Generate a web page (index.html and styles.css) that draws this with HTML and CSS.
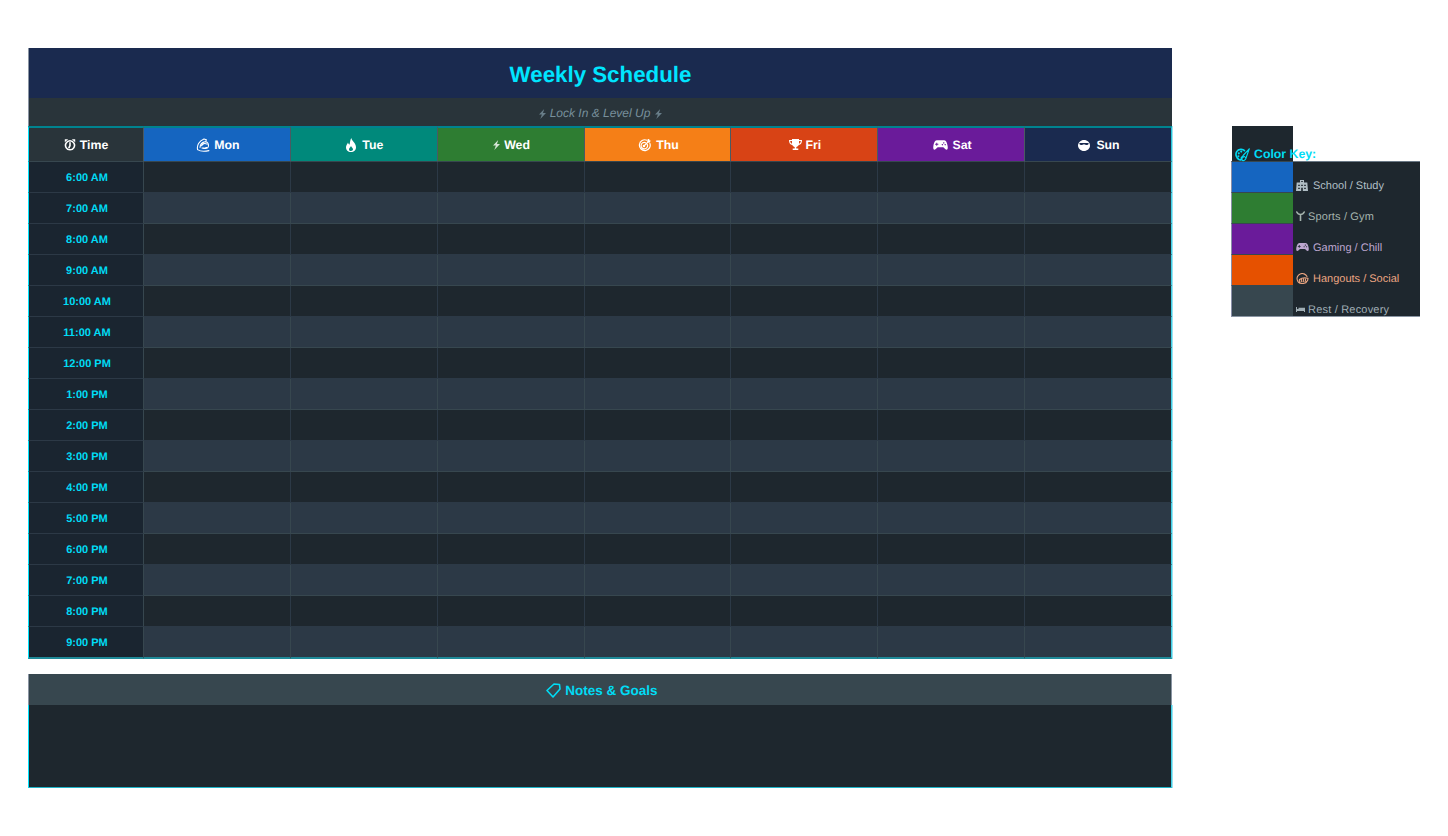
FILE: index.html
```html
<!DOCTYPE html>
<html lang="en">
<head>
<meta charset="utf-8">
<title>Weekly Schedule</title>
<link rel="stylesheet" href="styles.css">
</head>
<body>
<div class="page">
  <main class="main">
    <table class="schedule">
      <colgroup><col class="col-time"><col span="7"></colgroup>
      <thead>
        <tr class="title-row"><th colspan="8">Weekly Schedule</th></tr>
        <tr class="sub-row"><th colspan="8"><svg class="ico i-bolt" viewBox="0 0 7 10"><path d="M5.200 0 0 5.600h2.900L1.300 10 7 3.900H4z"/></svg>Lock In &amp; Level Up<svg class="ico i-bolt i-after" viewBox="0 0 7 10"><path d="M5.200 0 0 5.600h2.900L1.300 10 7 3.900H4z"/></svg></th></tr>
        <tr class="head-row">
          <th class="h-time"><svg class="ico i-clock" viewBox="0 0 12 12"><path class="ln ln-heavy" d="M6 1.800a4.500 4.500 0 1 0 .01 0zM6 3.800V6.600L5 8.600"/><path d="M.8.300h3.400L.8 3.200zM11.200.300H7.800l3.400 2.900z"/></svg>Time</th>
          <th class="h-mon"><svg class="ico i-arm" viewBox="0 0 14 14"><path class="ln" d="M1.600 11.600C.6 7.600 3 2.800 8 .9l2.400.8-.9 2.200c2-.5 3.600 2.600 2.700 5-1 2-3.600 2-5 1M1.600 11.600c3 2 7.500 1.800 11.300 1M5.600 7.800c1-2.200 3.200-3 5.400-1.700M4 9.500c.3-3 2-5 4.500-5.600M6 10c1.500.6 3 .4 4.400-.5"/></svg>Mon</th>
          <th class="h-tue"><svg class="ico i-flame" viewBox="0 0 10 14"><path fill-rule="evenodd" d="M5.300 0C6 3.200 10 5 10 9.200 10 12 8 14 5 14S0 12 0 9.200C0 7.200 1.300 6 2 4.400 2.400 5.800 3 6.500 3.600 6.500 4 4.500 4.200 2 5.300 0zM5 8C4.300 9.500 3 10 3 11.500 3 12.800 4 13 5 13s2-.5 2-1.700C7 10 5.700 9.500 5 8z"/></svg>Tue</th>
          <th class="h-wed"><svg class="ico i-bolt" viewBox="0 0 7 10"><path d="M5.200 0 0 5.600h2.900L1.300 10 7 3.900H4z"/></svg>Wed</th>
          <th class="h-thu"><svg class="ico i-target" viewBox="0 0 12 12"><path class="ln" d="M8.200 1.100A5 5 0 1 0 10.900 3.800M7 3.400A3 3 0 1 0 8.600 5M5.500 6.500 10 2"/><circle cx="5.500" cy="6.500" r="1.200"/><path d="M9 0h1.300l.4 1.300L12 1.700 10.200 3.500 8.500 3z"/></svg>Thu</th>
          <th class="h-fri"><svg class="ico i-trophy" viewBox="0 0 13 12"><path fill-rule="evenodd" d="M3 0h7v1h3c0 3-1 4.600-3.300 5-.5 1-1.400 1.700-2.400 2v1.600h2V11H3.700V9.600h2V8c-1-.3-1.900-1-2.400-2C1 5.600 0 4 0 1h3zM1.200 2c.1 1.300.7 2.400 1.800 2.800V2zM10 2v2.800c1.100-.4 1.700-1.500 1.800-2.800z"/></svg>Fri</th>
          <th class="h-sat"><svg class="ico i-pad" viewBox="0 0 16 12"><path fill-rule="evenodd" d="M4 1h8c2 0 3 3 3.600 6 .4 2.500 0 4-1.200 4-1.500 0-2.500-2.500-3.900-2.500h-5C4.100 8.500 3.100 11 1.600 11 .4 11 0 9.500.4 7 1 4 2 1 4 1zM3.500 3.500v1.200H2.300v1h1.200v1.200h1V5.700h1.200v-1H4.500V3.500zM11.500 3a.7.7 0 1 0 .01 0zM10 5a.7.7 0 1 0 .01 0zM13 5a.7.7 0 1 0 .01 0z"/></svg>Sat</th>
          <th class="h-sun"><svg class="ico i-face" viewBox="0 0 12 11"><path fill-rule="evenodd" d="M6 0c3.300 0 6 2.400 6 5.500S9.300 11 6 11 0 8.400 0 5.500 2.700 0 6 0zM2.200 3C1.500 3 1.200 3.500 1.400 4c.4 1 1.500 1.300 2.500.9L6 4.200l2.100.7c1 .4 2.100.1 2.500-.9.200-.5-.1-1-.8-1z"/></svg>Sun</th>
        </tr>
      </thead>
      <tbody>
        <tr><th>6:00 AM</th><td></td><td></td><td></td><td></td><td></td><td></td><td></td></tr>
        <tr><th>7:00 AM</th><td></td><td></td><td></td><td></td><td></td><td></td><td></td></tr>
        <tr><th>8:00 AM</th><td></td><td></td><td></td><td></td><td></td><td></td><td></td></tr>
        <tr><th>9:00 AM</th><td></td><td></td><td></td><td></td><td></td><td></td><td></td></tr>
        <tr><th>10:00 AM</th><td></td><td></td><td></td><td></td><td></td><td></td><td></td></tr>
        <tr><th>11:00 AM</th><td></td><td></td><td></td><td></td><td></td><td></td><td></td></tr>
        <tr><th>12:00 PM</th><td></td><td></td><td></td><td></td><td></td><td></td><td></td></tr>
        <tr><th>1:00 PM</th><td></td><td></td><td></td><td></td><td></td><td></td><td></td></tr>
        <tr><th>2:00 PM</th><td></td><td></td><td></td><td></td><td></td><td></td><td></td></tr>
        <tr><th>3:00 PM</th><td></td><td></td><td></td><td></td><td></td><td></td><td></td></tr>
        <tr><th>4:00 PM</th><td></td><td></td><td></td><td></td><td></td><td></td><td></td></tr>
        <tr><th>5:00 PM</th><td></td><td></td><td></td><td></td><td></td><td></td><td></td></tr>
        <tr><th>6:00 PM</th><td></td><td></td><td></td><td></td><td></td><td></td><td></td></tr>
        <tr><th>7:00 PM</th><td></td><td></td><td></td><td></td><td></td><td></td><td></td></tr>
        <tr><th>8:00 PM</th><td></td><td></td><td></td><td></td><td></td><td></td><td></td></tr>
        <tr><th>9:00 PM</th><td></td><td></td><td></td><td></td><td></td><td></td><td></td></tr>
      </tbody>
    </table>
    <section class="notes">
      <h2 class="notes-head"><svg class="ico i-tag" viewBox="0 0 15 15"><path class="ln ln-heavy" d="M1 7.500 8 1l5.500.5.500 4.500-7 8z"/></svg>Notes &amp; Goals</h2>
      <div class="notes-body"></div>
    </section>
  </main>
  <aside class="legend">
    <table class="key">
      <colgroup><col class="key-col"><col></colgroup>
      <tr class="key-title"><th><svg class="ico i-palette" viewBox="0 0 15 14"><path class="ln ln-heavy" d="M9.500 2.600C7.800.8 3.500.8 1.700 3.600.1 6.400 1.300 10 4 11.500c1.600.8 2.700 0 2.400-1-.3-1.300.9-1.900 2-1.600"/><path d="M3.800 4.200a1 1 0 1 0 .01 0zM6.200 2.500a1 1 0 1 0 .01 0zM3.400 7.200a1 1 0 1 0 .01 0z"/><path class="ln" d="M14.300.8 8.500 7c-1.100 1.200-1.900 3.500-1.300 5.500 2.300.6 3.600-1.300 4-3zM9.200 8.400l1.700 1.400"/></svg>Color Key:</th><td></td></tr>
      <tr class="key-first"><td class="sw sw-blue"></td><td class="lab"><svg class="ico i-school" viewBox="0 0 12 11"><path fill-rule="evenodd" d="M4 0h4v2.500h3.300L12 11H0l.7-8.500H4zM5.200 1v1h1.600V1zM2.200 4.700V6h1.600V4.700zM5.200 4.700V6h1.600V4.700zM8.200 4.700V6h1.600V4.700zM2.200 7.700V9h1.600V7.700zM5.200 7.700V11h1.600V7.700zM8.200 7.700V9h1.600V7.700z"/></svg>School / Study</td></tr>
      <tr><td class="sw sw-green"></td><td class="lab lab-sports"><svg class="ico i-lift" viewBox="0 0 9 10"><path class="ln ln-heavy" d="M.8 1c.8 1.800 2.200 2.500 3.700 2.500S7.400 2.800 8.200 1M4.500 3.500V10"/></svg>Sports / Gym</td></tr>
      <tr><td class="sw sw-purple"></td><td class="lab lab-gaming"><svg class="ico i-pad2" viewBox="0 0 16 12"><path fill-rule="evenodd" d="M4 1h8c2 0 3 3 3.600 6 .4 2.500 0 4-1.200 4-1.500 0-2.500-2.500-3.900-2.500h-5C4.100 8.500 3.100 11 1.600 11 .4 11 0 9.500.4 7 1 4 2 1 4 1zM3.500 3.500v1.200H2.300v1h1.200v1.200h1V5.700h1.200v-1H4.500V3.500zM11.500 3a.7.7 0 1 0 .01 0zM10 5a.7.7 0 1 0 .01 0zM13 5a.7.7 0 1 0 .01 0z"/></svg>Gaming / Chill</td></tr>
      <tr><td class="sw sw-orange"></td><td class="lab lab-social"><svg class="ico i-hands" viewBox="0 0 13 11"><path class="ln" d="M1.500 7.500A5 4.800 0 0 1 11 3.500M1.500 7.500c.5 2 2.500 3 5 3 2 0 4-.6 4.500-2.500M3.500 6.500c-.3 1.200-.2 2 .5 2.400M5.500 6c-.3 1.200-.2 2.300.5 2.700M7.500 6c-.3 1.200-.2 2.300.5 2.700M9.500 6.200c-.3 1-.2 1.800.5 2.200M3.500 6.500c2-1.500 5-2 8.500-1.200l-.5 2.500"/></svg>Hangouts / Social</td></tr>
      <tr class="key-last"><td class="sw sw-grey"></td><td class="lab lab-rest"><svg class="ico i-bed" viewBox="0 0 9 5"><path d="M0 0h1v2h1.500V.8H9V5H8V4H1v1H0z"/></svg>Rest / Recovery</td></tr>
    </table>
  </aside>
</div>
</body>
</html>
```
FILE: styles.css
```css
* { box-sizing: border-box; }
html, body { margin: 0; background: #fff; }
body { font-family: "Liberation Sans", Arial, sans-serif; text-rendering: geometricPrecision; }
.page { display: flex; align-items: flex-start; padding: 48px 0 0 28px; }
.main { width: 1144px; flex: none; display: flex; flex-direction: column; gap: 15px; }

.ico { display: inline-block; fill: currentColor; vertical-align: middle; margin-top: -4px; margin-bottom: -4px; margin-right: 4px; }
.ico .ln { fill: none; stroke: currentColor; stroke-width: 1.1; stroke-linecap: round; stroke-linejoin: round; }
.ico .ln-heavy { stroke-width: 1.6; }
.i-clock { width: 12px; height: 12px; }
.i-arm { width: 14px; height: 14px; }
.i-flame { width: 10px; height: 14px; margin-right: 6px; }
.i-bolt { width: 7px; height: 10px; opacity: 0.8; }
.sub-row .i-bolt { margin-right: 4px; }
.sub-row .i-after { margin-right: 0; margin-left: 5px; }
.i-target { width: 13px; height: 13px; margin-right: 5px; }
.i-trophy { width: 13px; height: 12px; margin-right: 3px; }
.i-pad { width: 15px; height: 12px; margin-right: 5px; }
.i-face { width: 12px; height: 11px; margin-right: 6px; }
.i-tag { width: 15px; height: 15px; }
.i-palette { width: 15px; height: 14px; }
.i-school { width: 12px; height: 11px; margin-right: 5px; }
.i-lift { width: 9px; height: 10px; margin-right: 3px; }
.i-pad2 { width: 13px; height: 10px; }
.i-hands { width: 13px; height: 11px; }
.i-bed { width: 9px; height: 5px; margin-right: 3px; }
.lab .ico { transform: translateY(-1px); }

.schedule { width: 1144px; table-layout: fixed; border-collapse: separate; border-spacing: 0; }
.col-time { width: 116px; }
.schedule th, .schedule td { padding: 0; }
.title-row th { height: 50px; background: #1a2a4f; color: #00e5ff; font-size: 22.3px; font-weight: 700; padding-top: 3px; border-left: 1px solid #8a95a3; }
.sub-row th { height: 28px; background: #29343a; color: #78909c; font-size: 12px; font-weight: 400; font-style: italic; padding-top: 2px; border-left: 1px solid #8a95a3; }
.head-row th { height: 36px; padding-left: 2px; color: #fff; font-size: 12.3px; font-weight: 700; border-top: 2px solid #00838f; border-bottom: 1px solid #37474f; border-right: 1px solid #4a5a62; }
.head-row th:first-child { padding-left: 0; border-left: 1px solid #00e5ff; }
.head-row th:last-child { border-right: 1px solid #26c6da; box-shadow: 1px 0 0 #9fe3ef; }
.h-time { background: #29343a; }
.h-mon { background: #1565c0; }
.h-tue { background: #00897b; }
.h-wed { background: #2e7d32; }
.h-thu { background: #f57f17; }
.h-fri { background: #d84315; }
.h-sat { background: #6a1b9a; }
.h-sun { background: #1a2a4f; }

.schedule tbody tr { height: 31px; }
.schedule tbody tr:last-child { height: 32px; }
.schedule tbody th { background: #1a2530; color: #00dcf5; font-size: 11px; font-weight: 700; padding: 2px 0 0 2px; border-left: 1px solid #00e5ff; border-right: 1px solid #37474f; border-bottom: 1px solid #2c3946; }
.schedule tbody td { background: #1e272e; border-right: 1px solid #2c3946; border-bottom: 1px solid #2c3946; }
.schedule tbody tr:nth-child(even) td { background: #2c3946; border-right-color: #37474f; border-bottom-color: #37474f; }
.schedule tbody td:last-child, .schedule tbody tr:nth-child(even) td:last-child { border-right: 1px solid #40d0e8; box-shadow: 1px 0 0 #9fe3ef; }
.schedule tbody tr:last-child th, .schedule tbody tr:last-child td { border-bottom: 2px solid #1f8a98; }

.notes-head { margin: 0; height: 31px; padding: 2px 0 0 4px; background: #37474f; color: #00dcf5; font-size: 13.5px; font-weight: 700; display: flex; align-items: center; justify-content: center; border-left: 1px solid #8a95a3; border-right: 1px solid #8a95a3; }
.notes-head .ico { margin-top: 0; margin-bottom: 0; }
.notes-body { height: 83px; background: #1e272e; border-left: 1px solid #00e5ff; border-right: 1px solid #40d0e8; border-bottom: 1px solid #1fb5c8; box-shadow: 1px 0 0 #9fe3ef; }

.legend { margin: 78px 0 0 59px; width: 189px; flex: none; }
.key { width: 189px; table-layout: fixed; border-collapse: separate; border-spacing: 0; }
.key-col { width: 62px; }
.key th, .key td { padding: 0; white-space: nowrap; }
.key tr { height: 31px; }
.key .key-title { height: 35px; }
.key .key-last { height: 32px; }
.key-title th { background: #1e272e; border-left: 1px solid #fff; color: #00dcf5; font-size: 12.3px; font-weight: 700; text-align: left; vertical-align: bottom; padding-left: 3px; }
.sw { border-left: 1px solid #8a8fa8; border-top: 1px solid #37474f; }
.sw-blue { background: #1565c0; }
.sw-green { background: #2e7d32; }
.sw-purple { background: #6a1b9a; }
.sw-orange { background: #e65100; }
.sw-grey { background: #37474f; }
.key-last .sw, .key-last .lab { border-bottom: 1px solid #8a95a3; }
.key-first .lab { border-top: 1px solid #6a7885; }
.key .lab { background: #1e272e; font-size: 11px; vertical-align: bottom; padding-left: 3px; color: #b0bec5; }
.key .lab-sports { color: #a4b3ad; letter-spacing: 0.15px; }
.key .lab-gaming { color: #bda6cf; }
.key .lab-social { color: #eba581; }
.key .lab-rest { color: #a0aeb5; letter-spacing: 0.2px; }
```
